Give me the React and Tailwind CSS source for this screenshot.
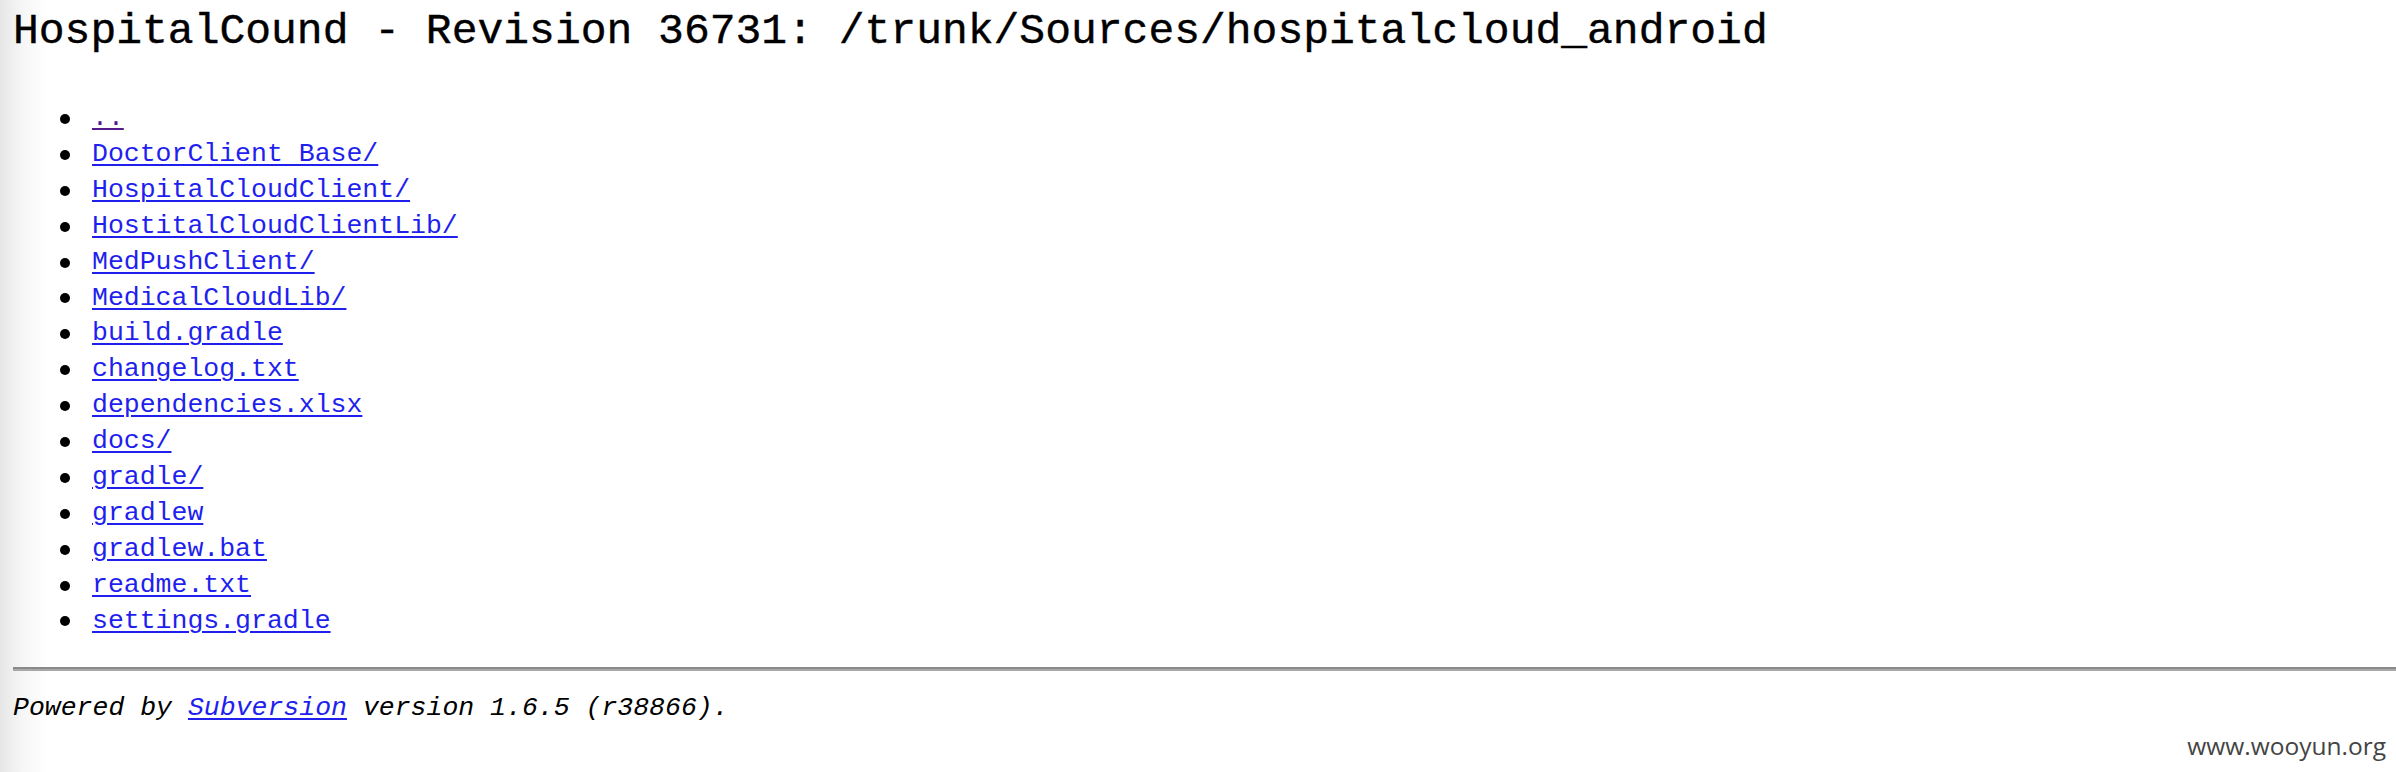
import React from "react";

const items = [
  { name: "..", visited: true },
  { name: "DoctorClient Base/" },
  { name: "HospitalCloudClient/" },
  { name: "HostitalCloudClientLib/" },
  { name: "MedPushClient/" },
  { name: "MedicalCloudLib/" },
  { name: "build.gradle" },
  { name: "changelog.txt" },
  { name: "dependencies.xlsx" },
  { name: "docs/" },
  { name: "gradle/" },
  { name: "gradlew" },
  { name: "gradlew.bat" },
  { name: "readme.txt" },
  { name: "settings.gradle" },
];

export default function App() {
  return (
    <div
      className="relative w-full min-h-[772px] overflow-hidden bg-[linear-gradient(to_right,#e6e6e6_0px,#f6f6f6_22px,#ffffff_48px)] text-black"
      style={{ fontFamily: '"Liberation Mono", "DejaVu Sans Mono", monospace' }}
    >
      <h2 className="pl-[13px] text-[43px] leading-[64px] font-normal whitespace-nowrap [-webkit-text-stroke:0.4px_#000]">
        HospitalCound - Revision 36731: /trunk/Sources/hospitalcloud_android
      </h2>

      <ul className="mt-[37px] pl-[60px] text-[26.5px] leading-[35.8px]">
        {items.map((it) => (
          <li key={it.name} className="flex items-center h-[35.9px]">
            <span className="w-[10px] h-[10px] rounded-full bg-black mr-[22px] shrink-0" />
            <a
              href="#"
              className={
                "whitespace-pre underline decoration-[2px] underline-offset-[3px] " +
                (it.visited ? "text-[#551a8b]" : "text-[#1f1fee]")
              }
            >
              {it.name}
            </a>
          </li>
        ))}
      </ul>

      <div className="mt-[28px] ml-[13px] h-[4px] border-t-2 border-b-2 border-t-[#8a8a8a] border-b-[#a8a8a8]" />

      <div className="mt-[20px] pl-[13px] text-[26.5px] leading-[35.8px] italic whitespace-nowrap">
        Powered by{" "}
        <a href="#" className="text-[#1f1fee] underline decoration-[2px] underline-offset-[3px]">
          Subversion
        </a>{" "}
        version 1.6.5 (r38866).
      </div>

      <div
        className="absolute right-[10px] bottom-[14px] text-[24.5px] leading-none text-[#444444]"
        style={{ fontFamily: '"Open Sans", "Noto Sans", sans-serif' }}
      >
        www.wooyun.org
      </div>
    </div>
  );
}
